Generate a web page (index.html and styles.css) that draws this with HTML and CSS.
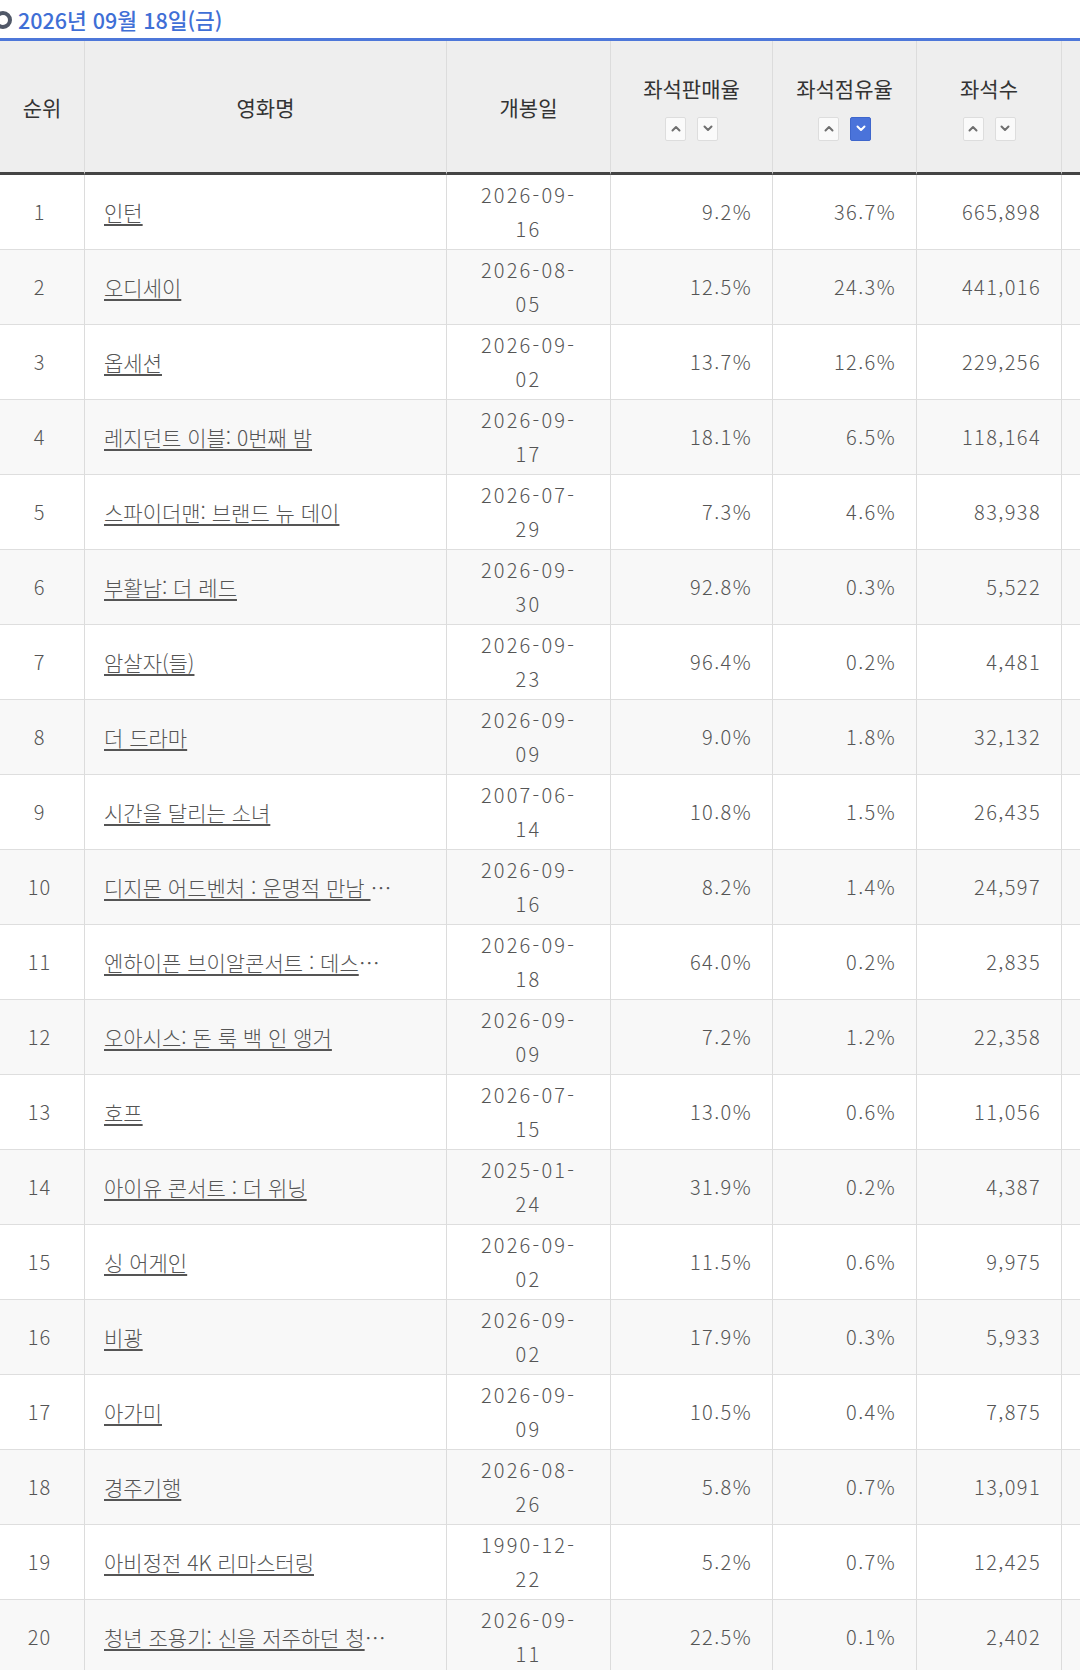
FILE: index.html
```html
<!DOCTYPE html>
<html lang="ko">
<head>
<meta charset="utf-8">
<title>좌석점유율 순위</title>
<link rel="stylesheet" href="styles.css">
</head>
<body>
<div class="page">
  <h2 class="date-title"><span class="ring"></span>2026년 09월 18일(금)</h2>
  <table class="rank-table">
    <thead>
      <tr>
        <th class="c-rank">순위</th>
        <th class="c-title">영화명</th>
        <th class="c-date">개봉일</th>
        <th class="c-num1">
          <div class="th-label">좌석판매율</div>
          <div class="sort">
            <span class="sort-btn"><svg viewBox="0 0 10 6" class="chev"><polyline points="1.5,5 5,1.5 8.5,5"/></svg></span>
            <span class="sort-btn"><svg viewBox="0 0 10 6" class="chev"><polyline points="1.5,1 5,4.5 8.5,1"/></svg></span>
          </div>
        </th>
        <th class="c-num2">
          <div class="th-label">좌석점유율</div>
          <div class="sort">
            <span class="sort-btn"><svg viewBox="0 0 10 6" class="chev"><polyline points="1.5,5 5,1.5 8.5,5"/></svg></span>
            <span class="sort-btn active"><svg viewBox="0 0 10 6" class="chev"><polyline points="1.5,1 5,4.5 8.5,1"/></svg></span>
          </div>
        </th>
        <th class="c-num3">
          <div class="th-label">좌석수</div>
          <div class="sort">
            <span class="sort-btn"><svg viewBox="0 0 10 6" class="chev"><polyline points="1.5,5 5,1.5 8.5,5"/></svg></span>
            <span class="sort-btn"><svg viewBox="0 0 10 6" class="chev"><polyline points="1.5,1 5,4.5 8.5,1"/></svg></span>
          </div>
        </th>
        <th class="c-more"></th>
      </tr>
    </thead>
    <tbody>
      <tr><td class="rank">1</td><td class="title"><div class="ell"><a href="#">인턴</a></div></td><td class="date">2026-09-16</td><td class="num">9.2%</td><td class="num">36.7%</td><td class="num">665,898</td><td></td></tr>
      <tr><td class="rank">2</td><td class="title"><div class="ell"><a href="#">오디세이</a></div></td><td class="date">2026-08-05</td><td class="num">12.5%</td><td class="num">24.3%</td><td class="num">441,016</td><td></td></tr>
      <tr><td class="rank">3</td><td class="title"><div class="ell"><a href="#">옵세션</a></div></td><td class="date">2026-09-02</td><td class="num">13.7%</td><td class="num">12.6%</td><td class="num">229,256</td><td></td></tr>
      <tr><td class="rank">4</td><td class="title"><div class="ell"><a href="#">레지던트 이블: 0번째 밤</a></div></td><td class="date">2026-09-17</td><td class="num">18.1%</td><td class="num">6.5%</td><td class="num">118,164</td><td></td></tr>
      <tr><td class="rank">5</td><td class="title"><div class="ell"><a href="#">스파이더맨: 브랜드 뉴 데이</a></div></td><td class="date">2026-07-29</td><td class="num">7.3%</td><td class="num">4.6%</td><td class="num">83,938</td><td></td></tr>
      <tr><td class="rank">6</td><td class="title"><div class="ell"><a href="#">부활남: 더 레드</a></div></td><td class="date">2026-09-30</td><td class="num">92.8%</td><td class="num">0.3%</td><td class="num">5,522</td><td></td></tr>
      <tr><td class="rank">7</td><td class="title"><div class="ell"><a href="#">암살자(들)</a></div></td><td class="date">2026-09-23</td><td class="num">96.4%</td><td class="num">0.2%</td><td class="num">4,481</td><td></td></tr>
      <tr><td class="rank">8</td><td class="title"><div class="ell"><a href="#">더 드라마</a></div></td><td class="date">2026-09-09</td><td class="num">9.0%</td><td class="num">1.8%</td><td class="num">32,132</td><td></td></tr>
      <tr><td class="rank">9</td><td class="title"><div class="ell"><a href="#">시간을 달리는 소녀</a></div></td><td class="date">2007-06-14</td><td class="num">10.8%</td><td class="num">1.5%</td><td class="num">26,435</td><td></td></tr>
      <tr><td class="rank">10</td><td class="title"><div class="ell"><a href="#">디지몬 어드벤처 : 운명적 만남 극장판</a></div></td><td class="date">2026-09-16</td><td class="num">8.2%</td><td class="num">1.4%</td><td class="num">24,597</td><td></td></tr>
      <tr><td class="rank">11</td><td class="title"><div class="ell"><a href="#">엔하이픈 브이알콘서트 : 데스티니</a></div></td><td class="date">2026-09-18</td><td class="num">64.0%</td><td class="num">0.2%</td><td class="num">2,835</td><td></td></tr>
      <tr><td class="rank">12</td><td class="title"><div class="ell"><a href="#">오아시스: 돈 룩 백 인 앵거</a></div></td><td class="date">2026-09-09</td><td class="num">7.2%</td><td class="num">1.2%</td><td class="num">22,358</td><td></td></tr>
      <tr><td class="rank">13</td><td class="title"><div class="ell"><a href="#">호프</a></div></td><td class="date">2026-07-15</td><td class="num">13.0%</td><td class="num">0.6%</td><td class="num">11,056</td><td></td></tr>
      <tr><td class="rank">14</td><td class="title"><div class="ell"><a href="#">아이유 콘서트 : 더 위닝</a></div></td><td class="date">2025-01-24</td><td class="num">31.9%</td><td class="num">0.2%</td><td class="num">4,387</td><td></td></tr>
      <tr><td class="rank">15</td><td class="title"><div class="ell"><a href="#">싱 어게인</a></div></td><td class="date">2026-09-02</td><td class="num">11.5%</td><td class="num">0.6%</td><td class="num">9,975</td><td></td></tr>
      <tr><td class="rank">16</td><td class="title"><div class="ell"><a href="#">비광</a></div></td><td class="date">2026-09-02</td><td class="num">17.9%</td><td class="num">0.3%</td><td class="num">5,933</td><td></td></tr>
      <tr><td class="rank">17</td><td class="title"><div class="ell"><a href="#">아가미</a></div></td><td class="date">2026-09-09</td><td class="num">10.5%</td><td class="num">0.4%</td><td class="num">7,875</td><td></td></tr>
      <tr><td class="rank">18</td><td class="title"><div class="ell"><a href="#">경주기행</a></div></td><td class="date">2026-08-26</td><td class="num">5.8%</td><td class="num">0.7%</td><td class="num">13,091</td><td></td></tr>
      <tr><td class="rank">19</td><td class="title"><div class="ell"><a href="#">아비정전 4K 리마스터링</a></div></td><td class="date">1990-12-22</td><td class="num">5.2%</td><td class="num">0.7%</td><td class="num">12,425</td><td></td></tr>
      <tr><td class="rank">20</td><td class="title"><div class="ell"><a href="#">청년 조용기: 신을 저주하던 청년의 이야기</a></div></td><td class="date">2026-09-11</td><td class="num">22.5%</td><td class="num">0.1%</td><td class="num">2,402</td><td></td></tr>
    </tbody>
  </table>
</div>
</body>
</html>
```

FILE: styles.css
```css
html, body {
  margin: 0;
  padding: 0;
  background: #ffffff;
}
body {
  overflow: hidden;
  font-family: "Noto Sans CJK KR", "Noto Sans", sans-serif;
  color: #555555;
}
.page {
  width: 1161px;
}
.date-title {
  margin: 0;
  height: 38px;
  display: flex;
  align-items: center;
  font-size: 21.5px;
  font-weight: 500;
  color: #3f6fd6;
}
.ring {
  display: inline-block;
  width: 10px;
  height: 10px;
  border: 4px solid #505868;
  border-radius: 50%;
  margin-left: -6px;
  margin-right: 6px;
  margin-top: 1px;
}
.rank-table {
  border-collapse: separate;
  border-spacing: 0;
  table-layout: fixed;
  width: 1161px;
  border-top: 3px solid #4d77d9;
}
.rank-table th,
.rank-table td {
  box-sizing: border-box;
  border-right: 1px solid #dcdcdc;
  padding: 0;
}
.rank-table th {
  height: 134px;
  background: #eeeeee;
  border-bottom: 3px solid #444444;
  font-weight: 400;
  font-size: 21px;
  color: #333333;
  vertical-align: middle;
  text-align: center;
}
.c-rank { width: 85px; }
.c-title { width: 362px; }
.c-date { width: 164px; }
.c-num1 { width: 162px; }
.c-num2 { width: 144px; }
.c-num3 { width: 145px; }
.c-more { width: 99px; }
.th-label {
  line-height: 30px;
}
.sort {
  display: flex;
  justify-content: center;
  gap: 11px;
  margin-top: 14px;
}
.sort-btn {
  box-sizing: border-box;
  width: 21px;
  height: 24px;
  border: 1px solid #dddddd;
  border-radius: 2px;
  background: #fafafa;
  display: flex;
  align-items: center;
  justify-content: center;
}
.sort-btn .chev {
  width: 10px;
  height: 7px;
  fill: none;
  stroke: #6f6f6f;
  stroke-width: 2;
  stroke-linecap: round;
  stroke-linejoin: round;
}
.sort-btn.active {
  background: #4a73da;
  border-color: #3e66cc;
}
.sort-btn.active .chev {
  stroke: #ffffff;
}
.rank-table td {
  height: 75px;
  border-bottom: 1px solid #dedede;
  font-size: 20px;
  font-weight: 300;
  line-height: 34px;
  vertical-align: middle;
}
.rank-table tbody tr:nth-child(even) td {
  background: #f8f8f8;
}
.rank {
  text-align: center;
  letter-spacing: 1px;
  padding-right: 5px !important;
}
.title {
  padding-left: 19px !important;
}
.ell {
  width: 288px;
  white-space: nowrap;
  overflow: hidden;
  text-overflow: ellipsis;
  font-size: 21px;
}
.ell a {
  color: #555555;
  text-decoration: underline;
  text-underline-offset: 3px;
}
.date {
  text-align: center;
  padding: 0 22px !important;
  font-size: 21px;
  letter-spacing: 2.2px;
}
.num {
  text-align: right;
  padding-right: 20px !important;
  letter-spacing: 1.4px;
}
```
